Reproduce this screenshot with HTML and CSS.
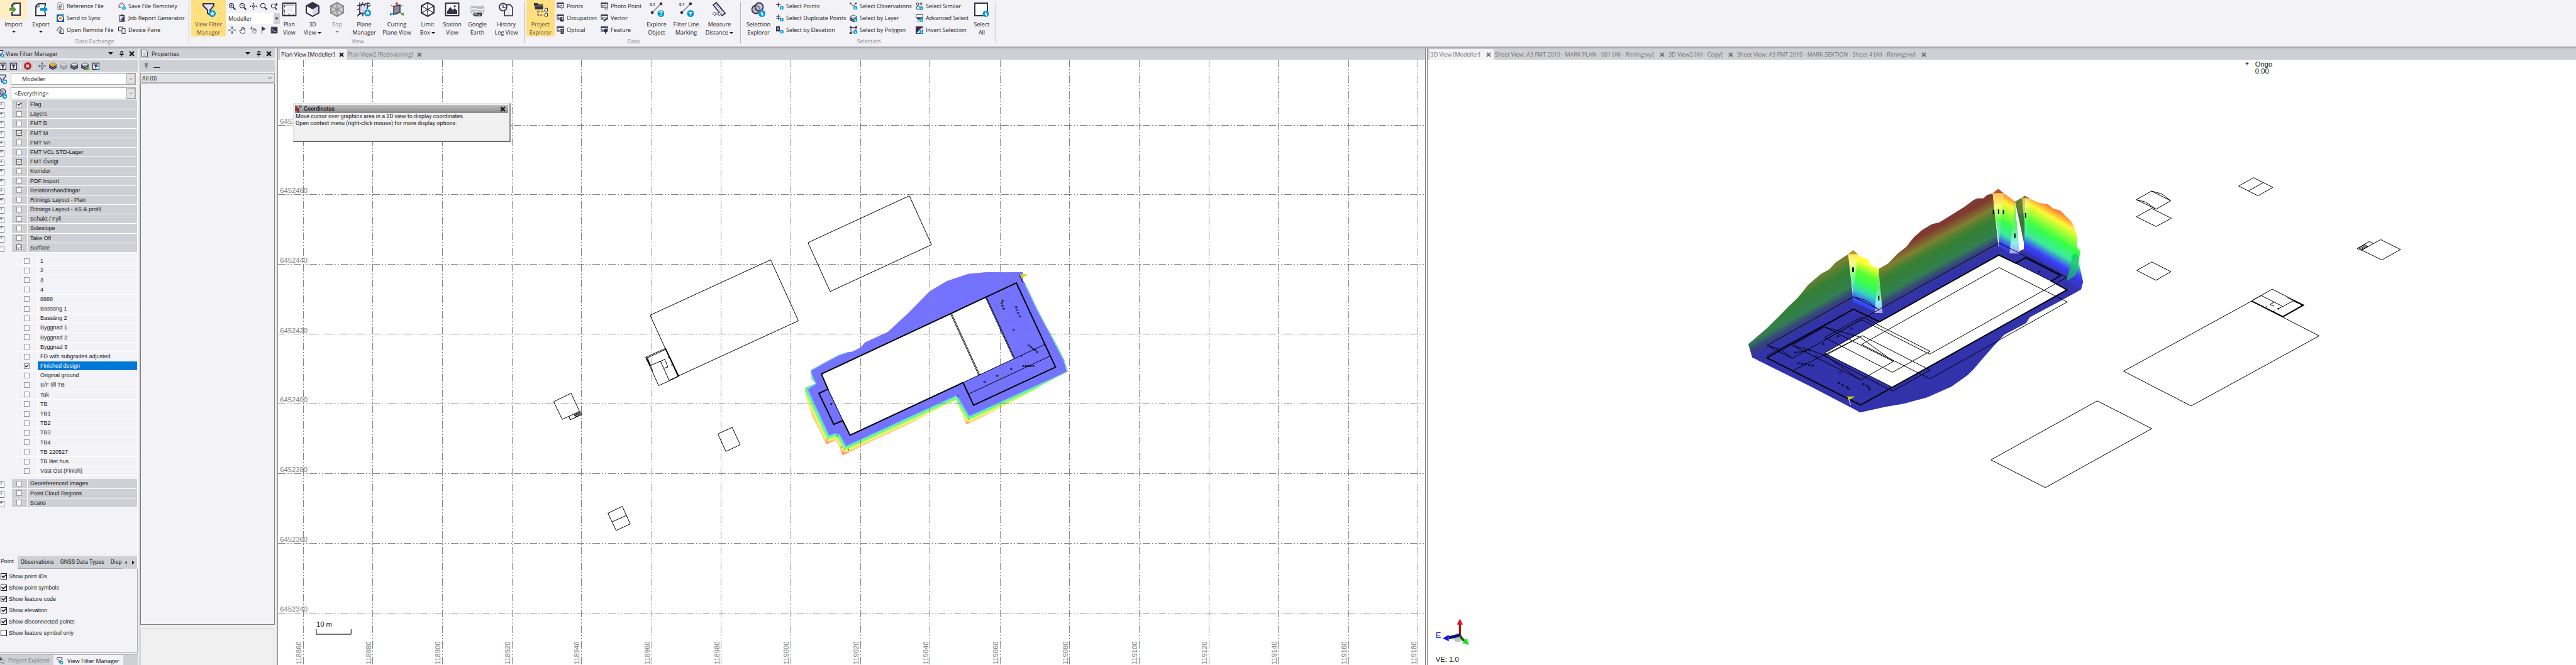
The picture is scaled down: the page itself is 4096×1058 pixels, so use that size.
FILE: index.html
```html
<!DOCTYPE html>
<html lang="en">
<head>
<meta charset="utf-8">
<title>Plan View [Modeller]</title>
<link rel="stylesheet" href="styles.css">
</head>
<body>
<svg class="defs" aria-hidden="true">
  <defs>
    <symbol id="star" viewBox="0 0 10 10"><circle cx="5" cy="5" r="5" fill="#009ad9"/><path d="M5 1.6l1 2.2 2.4.2-1.8 1.6.6 2.4L5 6.800l-2.200 1.200.6-2.400L1.600 4l2.400-.2z" fill="#fff"/></symbol>
    <symbol id="cur" viewBox="0 0 10 10"><circle cx="5" cy="5" r="5" fill="#009ad9"/><path d="M3.500 1.500v6l1.500-1.300 1 2.300 1-.5-1-2.100h1.700z" fill="#fff"/></symbol>
    <symbol id="import" viewBox="0 0 24 24"><path d="M9 9V5l3-3h10v19H9v-5" fill="#fff" stroke="#33304a" stroke-width="2"/><path d="M9 5h4V2" fill="none" stroke="#33304a"/><path d="M5 10h5V6l6 6-6 6v-4H5z" fill="#5a9a2c"/></symbol>
    <symbol id="export" viewBox="0 0 24 24"><path d="M19 7V3H8L4 7v15h15v-5" fill="#fff" stroke="#33304a" stroke-width="2"/><path d="M4 8h5V3" fill="none" stroke="#33304a"/><path d="M11 10h6V6l6 6-6 6v-4h-6z" fill="#009ad9"/></symbol>
    <symbol id="ref" viewBox="0 0 12 12"><path d="M2 .5h5.500L10.500 3v8.500H2z" fill="#fff" stroke="#777"/><rect x="5" y="2.500" width="3" height="4" rx="1.500" fill="none" stroke="#555"/><rect x="4" y="5.500" width="3" height="4" rx="1.500" fill="none" stroke="#555"/></symbol>
    <symbol id="sync" viewBox="0 0 12 12"><path d="M0 0h12v12H0z" fill="#155f9e"/><circle cx="6" cy="6" r="3.200" fill="none" stroke="#fff" stroke-width="2"/><circle cx="6" cy="6" r="2.400" fill="#f6a51c"/><path d="M9 1l3 0v5z" fill="#5fb8e8"/></symbol>
    <symbol id="remote" viewBox="0 0 12 12"><path d="M3 7.500C0 7.500 0 4 2.500 3.500 3 0 8 0 8.500 3.500" fill="#e4e3f5" stroke="#33304a"/><path d="M5.500 4h4l2 2v5.500h-6z" fill="#fff" stroke="#33304a"/><path d="M3 11l4-4M7 10V7H4" fill="none" stroke="#33304a"/></symbol>
    <symbol id="saverem" viewBox="0 0 12 12"><path d="M3 7.500C0 7.500 0 4 2.500 3.500 3 0 8 0 8.500 3.500c2 .5 2 2 1.500 3" fill="#e4e3f5" stroke="#33304a"/><path d="M2 9l2-2" stroke="#33304a"/><circle cx="9" cy="9" r="3" fill="#009ad9"/><path d="M7 8h4M7 10h4M9 6v6" stroke="#fff" stroke-width=".6"/></symbol>
    <symbol id="report" viewBox="0 0 12 12"><path d="M2 1.500h8v10H2z" fill="#e4e3f5" stroke="#33304a"/><path d="M4 0h4v2.500H4z" fill="#33304a"/><path d="M4.500 10V7M6.500 10V5M8.500 10V3.500" stroke="#33304a" stroke-width="1.500"/></symbol>
    <symbol id="device" viewBox="0 0 12 12"><path d="M.5 1h7v6h-7z" fill="#fff" stroke="#33304a"/><path d="M6 3.500h5v8H6z" fill="#fff" stroke="#33304a"/></symbol>
    <symbol id="funnel" viewBox="0 0 24 24"><path d="M3 3h17v3l-6 7v8l-4-3v-5L3 6z" fill="#e4e3f5" stroke="#33304a" stroke-width="2"/><use href="#star" x="12" y="13" width="11" height="11"/></symbol>
    <symbol id="mag" viewBox="0 0 12 12"><circle cx="5" cy="5" r="3.600" fill="#fff" stroke="#33304a" stroke-width="1.200"/><path d="M7.500 7.500l4 4" stroke="#33304a" stroke-width="2"/></symbol>
    <symbol id="magin" viewBox="0 0 12 12"><use href="#mag"/><path d="M3 5h4M5 3v4" stroke="#33304a"/></symbol>
    <symbol id="magout" viewBox="0 0 12 12"><use href="#mag"/><path d="M3 5h4" stroke="#33304a"/></symbol>
    <symbol id="ext" viewBox="0 0 12 12"><circle cx="6" cy="6" r="1.700" fill="#fff" stroke="#33304a"/><path d="M6 0l1.500 2h-3zM6 12l1.500-2h-3zM0 6l2-1.500v3zM12 6l-2-1.500v3z" fill="#33304a"/><path d="M2 6h2M8 6h2M6 2v2M6 8v2" stroke="#33304a" stroke-width=".6"/></symbol>
    <symbol id="magplus" viewBox="0 0 12 12"><use href="#mag" y="1" width="11" height="11"/><path d="M7 3h5M9.500 .5v5" stroke="#33304a"/></symbol>
    <symbol id="cross" viewBox="0 0 12 12"><path d="M6 0v4M6 8v4M0 6h4M8 6h4" stroke="#33304a" stroke-width="1.200"/><path d="M6 4.600l-1.500-2h3zM6 7.400l-1.500 2h3z" fill="#33304a"/></symbol>
    <symbol id="hand" viewBox="0 0 12 12"><path d="M3.500 11L1 7l1-1 1.500 1V2.500l1.500 0V1.500l1.500-.5 0 1h1.500v1h1.500v5L8.500 11z" fill="#fff" stroke="#33304a" stroke-width=".9"/><path d="M5 3v3M6.600 3v3M8.200 3v3" stroke="#33304a" stroke-width=".7"/></symbol>
    <symbol id="hand2" viewBox="0 0 12 12"><use href="#hand" x="3" y="2" width="9" height="10"/><path d="M3 0v6M0 3h6" stroke="#33304a" stroke-width=".8"/></symbol>
    <symbol id="flag" viewBox="0 0 12 12"><path d="M3.500 0v12" stroke="#33304a"/><path d="M4 .5L9.500 4 4 7z" fill="#33304a"/></symbol>
    <symbol id="term" viewBox="0 0 12 12"><path d="M1 1h10v10H1z" fill="#33304a" stroke="#77748a"/><path d="M3 3.500l2 2-2 2M5.500 8.500h3" fill="none" stroke="#fff" stroke-width=".9"/></symbol>
    <symbol id="plan" viewBox="0 0 24 24"><path d="M1.500 2h21v20h-21z" fill="#fff" stroke="#33304a" stroke-width="1.800"/><path d="M4.500 18V5h15" fill="none" stroke="#33304a" stroke-width="1.500" stroke-dasharray="1 1"/><path d="M4 19.500h16" stroke="#33304a" stroke-width="1.500" stroke-dasharray="1 1"/><path d="M9 8h8v8H9z" fill="#e4e3ee"/><path d="M15 10h-3v5h3" fill="none" stroke="#fff" stroke-width="1.500"/></symbol>
    <symbol id="cube" viewBox="0 0 24 24"><path d="M2 6.500L12 1l10 5.500v11L12 23 2 17.500z" fill="#fff" stroke="#33304a" stroke-width="2"/><path d="M2 6.500L12 1l10 5.500L12 12z" fill="#33304a"/><path d="M12 12v10l9-5V7z" fill="#d6d4ea"/></symbol>
    <symbol id="cubetop" viewBox="0 0 24 24"><path d="M2 6.500L12 1l10 5.500v11L12 23 2 17.500z" fill="#c9c9c9" stroke="#888" stroke-width="2"/><path d="M2 6.500L12 12l10-5.500M12 12v11M12 1v11L2 17.500M12 12l10 5.500" fill="none" stroke="#888" stroke-width="1.400"/></symbol>
    <symbol id="plane" viewBox="0 0 24 24"><path d="M6 7l11-3v12L6 19z" fill="#dddcea"/><path d="M1 6l20-4M1 12l4-1M2 20l16-4M5 1v20M10 1l-3 6M17 1v10M10 23v-6M14 2l-2 5M1 23l6-6M17 8l5-3" fill="none" stroke="#33304a" stroke-width="1.700"/><use href="#star" x="12" y="12" width="11" height="11"/></symbol>
    <symbol id="cut" viewBox="0 0 24 24"><path d="M12 4v16M3 5l8 6M21 5l-8 6M12 13l-8 7M12 13l8 6" stroke="#33304a"/><path d="M12 0l3 4H9z" fill="#e02020"/><path d="M1 22v-5l5 3z" fill="#009ad9"/><path d="M23 22v-5l-5 3z" fill="#5a9a2c"/><path d="M7 7l10-2v12L7 20z" fill="#8e8c99" stroke="#33304a" stroke-width="1.500"/></symbol>
    <symbol id="limit" viewBox="0 0 24 24"><path d="M2 6.500L12 1l10 5.500v11L12 23 2 17.500z" fill="#fff" stroke="#33304a" stroke-width="2"/><path d="M2 6.500L12 12l10-5.500M12 12v11M12 1v11L2 17.500M12 12l10 5.500" fill="none" stroke="#33304a" stroke-width="1.300"/></symbol>
    <symbol id="station" viewBox="0 0 24 24"><path d="M1.500 2h21v20h-21z" fill="#fff" stroke="#33304a" stroke-width="2"/><path d="M4 19v-4l5-7 4 5 3-3 4 4v5z" fill="#33304a"/><circle cx="16" cy="7" r="1.700" fill="#33304a"/></symbol>
    <symbol id="earth" viewBox="0 0 24 24"><circle cx="12" cy="12" r="11.500" fill="#b9bcc4"/><path d="M1 9c6-7 12 2 21-4-3-4-7-5-10-5S3 3 1 9z" fill="#f4f4f6"/><path d="M1 13c7-6 12 3 22-2M3 19c6-7 11 1 18-3" fill="none" stroke="#f2f2f5" stroke-width="2.500"/><path d="M6 17h13v6H6z" fill="#333"/><text x="12" y="22" text-anchor="middle" font-size="6" fill="#fff">Pro</text></symbol>
    <symbol id="history" viewBox="0 0 26 24"><path d="M10 4h10l4 5v14H10z" fill="#fff" stroke="#33304a" stroke-width="1.800"/><path d="M12 12h9M12 15h9M12 18h9M12 21h9" stroke="#bbb"/><circle cx="7.500" cy="8" r="6.500" fill="#eeeefa" stroke="#33304a" stroke-width="2"/><path d="M7.500 4v5h4" fill="none" stroke="#33304a" stroke-width="1.500"/></symbol>
    <symbol id="proj" viewBox="0 0 24 24"><path d="M1 2h6l1 2h7v2H1z" fill="#33304a"/><path d="M2 7h14l-1 5H3z" fill="#33304a"/><path d="M7 14v7h9M7 15h9" fill="none" stroke="#33304a" stroke-width="1.600" stroke-dasharray="1.500 1"/><path d="M18 12l2-2h2.500v5H18zM18 20l2-2h2.500v5H18z" fill="#fff" stroke="#33304a"/></symbol>
    <symbol id="table" viewBox="0 0 12 12"><path d="M1 1h10v7H1z" fill="#fff" stroke="#33304a"/><path d="M.5 0h11v2.500H.5z" fill="#33304a"/><path d="M2.500 4.500h2M6 4.500h2M2.500 6.500h2" stroke="#33304a"/></symbol>
    <symbol id="t1" viewBox="0 0 12 12"><use href="#table"/><path d="M8 5.500v5M6 8h4" stroke="#33304a"/><circle cx="8" cy="8" r="1" fill="#fff"/></symbol>
    <symbol id="t2" viewBox="0 0 12 12"><use href="#table"/><circle cx="8.500" cy="8" r="3.500" fill="#33304a"/><path d="M8.500 8V5.500A2.500 2.500 0 0 1 11 8z" fill="#fff"/></symbol>
    <symbol id="t3" viewBox="0 0 12 12"><use href="#table"/><rect x="6.500" y="4" width="5" height="8" rx="1" fill="#33304a"/><path d="M8 6h2M8 9h2" stroke="#fff"/></symbol>
    <symbol id="t4" viewBox="0 0 12 12"><use href="#table"/><circle cx="9" cy="9" r="2" fill="#fff" stroke="#33304a"/></symbol>
    <symbol id="t5" viewBox="0 0 12 12"><use href="#table"/><path d="M5 11l6-6" stroke="#33304a" stroke-width="2"/></symbol>
    <symbol id="t6" viewBox="0 0 12 12"><use href="#table"/><circle cx="8" cy="6.500" r="3" fill="#33304a"/><path d="M8 8v4" stroke="#33304a" stroke-width="1.500"/></symbol>
    <symbol id="line01" viewBox="0 0 24 24"><text x="1" y="6" font-size="6" font-weight="700" fill="#33304a">0.1</text><path d="M5 17L19 3" stroke="#777585" stroke-width="1.500"/><circle cx="5" cy="17" r="2.300" fill="#33304a"/><circle cx="19" cy="3" r="2.300" fill="#33304a"/></symbol>
    <symbol id="explore" viewBox="0 0 24 24"><use href="#line01"/><circle cx="19" cy="18.500" r="5.500" fill="#009ad9"/><path d="M17 17c0-3 4-3 4-.5 0 1.500-2 1.500-2 3M19 20.500v1.500" fill="none" stroke="#fff" stroke-width="1.400"/></symbol>
    <symbol id="filterline" viewBox="0 0 24 24"><use href="#line01"/><circle cx="19" cy="18.500" r="5.500" fill="#009ad9"/><path d="M16 16h6l-2 3v3l-2-1v-2z" fill="#fff"/></symbol>
    <symbol id="measure" viewBox="0 0 24 24"><path d="M2 5l5-4 14 17-5 4z" fill="#e4e3f5" stroke="#33304a" stroke-width="1.800"/><path d="M7 6l2-1.500M9.500 9l2-1.500M12 12l2-1.500M14.500 15l2-1.500" stroke="#33304a"/><path d="M1 19l4-3v2h6v-2l4 3-4 3v-2H5v2z" fill="#fff" stroke="#33304a" stroke-width=".8"/></symbol>
    <symbol id="selexp" viewBox="0 0 24 24"><circle cx="8" cy="12" r="6.500" fill="#a9a6bf" fill-opacity=".8" stroke="#33304a" stroke-width="1.800"/><circle cx="13" cy="8" r="6.500" fill="#a9a6bf" fill-opacity=".6" stroke="#33304a" stroke-width="1.800"/><use href="#cur" x="12" y="13" width="11" height="11"/></symbol>
    <symbol id="selpt" viewBox="0 0 12 12"><path d="M3.500 0v7M0 3.500h7" stroke="#33304a"/><circle cx="3.500" cy="3.500" r="1.200" fill="#33304a"/><use href="#cur" x="6" y="5.500" width="6" height="6"/></symbol>
    <symbol id="seldup" viewBox="0 0 12 12"><path d="M3.500 0v9M0 3h7M0 6h7" stroke="#33304a"/><use href="#cur" x="6" y="5.500" width="6" height="6"/></symbol>
    <symbol id="selel" viewBox="0 0 12 12"><path d="M0 0h6v8H0z" fill="#33304a"/><path d="M3 6V2M1.500 3.500L3 2l1.500 1.500" fill="none" stroke="#fff"/><use href="#cur" x="6" y="5.500" width="6" height="6"/></symbol>
    <symbol id="selobs" viewBox="0 0 12 12"><path d="M1 1l5 5 4-5" fill="none" stroke="#33304a"/><circle cx="1.200" cy="1.200" r="1.200" fill="#33304a"/><circle cx="10" cy="1.200" r="1.200" fill="#33304a"/><use href="#cur" x="6" y="5.500" width="6" height="6"/></symbol>
    <symbol id="layers" viewBox="0 0 12 12"><path d="M0 7l6 3 6-3v2l-6 3-6-3zM0 4.500l6 3 6-3V6.500l-6 3-6-3z" fill="#33304a"/><path d="M.5 3.500L6 .8l5.500 2.700L6 6.200z" fill="#e9e8f5" stroke="#33304a" stroke-width=".8"/></symbol>
    <symbol id="sellay" viewBox="0 0 12 12"><use href="#layers"/><use href="#cur" x="6" y="6" width="6" height="6"/></symbol>
    <symbol id="selpoly" viewBox="0 0 12 12"><path d="M2 1.500h8v9H2z" fill="#e4e3f5" stroke="#33304a"/><path d="M0 0h3v3H0zM9 0h3v3H9zM0 9h3v3H0z" fill="#33304a"/><use href="#cur" x="6" y="6" width="6" height="6"/></symbol>
    <symbol id="selsim" viewBox="0 0 12 12"><circle cx="3" cy="2.500" r="2" fill="none" stroke="#33304a"/><circle cx="8.500" cy="2" r="1.600" fill="none" stroke="#33304a"/><circle cx="4" cy="8.500" r="2.800" fill="none" stroke="#33304a"/><use href="#cur" x="6" y="6" width="6" height="6"/></symbol>
    <symbol id="seladv" viewBox="0 0 12 12"><path d="M.5 .5h11v4H.5z" fill="#fff" stroke="#33304a"/><path d="M2 6.500h9M2 8.500h6M2 10.500h6" stroke="#33304a"/><use href="#cur" x="6" y="6" width="6" height="6"/></symbol>
    <symbol id="selinv" viewBox="0 0 12 12"><path d="M.5 .5h11v11H.5z" fill="#fff" stroke="#33304a"/><path d="M0 12V0h12z" fill="#33304a"/><use href="#cur" x="6" y="6" width="6" height="6"/></symbol>
    <symbol id="selall" viewBox="0 0 24 24"><path d="M1 2h20v20H1z" fill="#fff" stroke="#33304a" stroke-width="2"/><use href="#cur" x="13" y="14" width="11" height="10"/></symbol>
    <symbol id="pin" viewBox="0 0 10 10"><path d="M3 1h4v5M3.500 1v5M1.500 6h7M5 6v4" fill="none" stroke="#000" stroke-width="1.200"/></symbol>
    <symbol id="x" viewBox="0 0 8 8"><path d="M1 1l6 6M7 1L1 7" stroke="currentColor" stroke-width="1.900"/></symbol>
    <symbol id="doc" viewBox="0 0 12 12"><path d="M1.500 .5h6l3 3v8h-9z" fill="#fff" stroke="#444"/><path d="M3 4h5M3 6h6M3 8h6M3 10h6" stroke="#777" stroke-width=".7"/></symbol>
    <symbol id="filt2" viewBox="0 0 12 12"><path d="M1.500 1.500h10v10h-10z" fill="#fff" stroke="#33304a" stroke-width="1.500"/><path d="M3 3.500h7L7.500 7v3.500l-2-1V7z" fill="#33304a"/></symbol>
    <symbol id="filt3" viewBox="0 0 12 12"><use href="#filt2"/><circle cx="9" cy="9" r="2.500" fill="#fff" stroke="#009ad9"/></symbol>
    <symbol id="stop" viewBox="0 0 12 12"><circle cx="6" cy="6" r="6" fill="#c8202c"/><path d="M4 4l4 4M8 4L4 8" stroke="#fff" stroke-width="1.800"/></symbol>
    <symbol id="layorange" viewBox="0 0 12 12"><use href="#layers"/><path d="M.5 3.500L6 .8l5.500 2.700L6 6.200z" fill="#ffb400"/></symbol>
    <symbol id="laygreen" viewBox="0 0 12 12"><use href="#layers"/><rect x="7" y="7" width="5" height="5" rx="1" fill="#4aa32c"/></symbol>
    <symbol id="chev" viewBox="0 0 8 8"><path d="M1 2.500l3 3 3-3" fill="none" stroke="#444"/></symbol>
  </defs>
</svg>

<header class="ribbon">
  <section class="group exchange">
    <div class="tools">
      <button class="big w43 warm"><svg><use href="#import"/></svg>Import<i></i></button>
      <button class="big w44"><svg><use href="#export"/></svg>Export<i></i></button>
      <div class="col w98"><button><svg><use href="#ref"/></svg>Reference File</button><button><svg><use href="#sync"/></svg>Send to Sync</button><button><svg><use href="#remote"/></svg>Open Remote File</button></div>
      <div class="col"><button><svg><use href="#saverem"/></svg>Save File Remotely</button><button><svg><use href="#report"/></svg>Job Report Generator</button><button><svg><use href="#device"/></svg>Device Pane</button></div>
    </div>
    <h2>Data Exchange</h2>
  </section>
  <section class="group viewing">
    <div class="tools">
      <button class="big w55 on"><svg><use href="#funnel"/></svg>View Filter<br>Manager</button>
      <div class="nav">
        <div><button aria-label="Zoom in"><svg><use href="#magin"/></svg></button><button aria-label="Zoom out"><svg><use href="#magout"/></svg></button><button aria-label="Zoom extents"><svg><use href="#ext"/></svg></button><button aria-label="Zoom window"><svg><use href="#mag"/></svg></button><button aria-label="Zoom selected"><svg><use href="#magplus"/></svg></button></div>
        <div class="pick"><select aria-label="View filter"><option>Modeller</option></select><i></i></div>
        <div><button aria-label="Center"><svg><use href="#cross"/></svg></button><button aria-label="Pan"><svg><use href="#hand"/></svg></button><button aria-label="Pan to point"><svg><use href="#hand2"/></svg></button><button aria-label="Flag"><svg><use href="#flag"/></svg></button><button aria-label="Command pane"><svg><use href="#term"/></svg></button></div>
      </div>
      <button class="big w28"><svg><use href="#plan"/></svg>Plan<br>View</button>
      <button class="big w46"><svg><use href="#cube"/></svg>3D<span>View <i></i></span></button>
      <button class="big w32 dim"><svg><use href="#cubetop"/></svg>Top<i></i></button>
      <button class="big w54"><svg><use href="#plane"/></svg>Plane<br>Manager</button>
      <button class="big w50"><svg><use href="#cut"/></svg>Cutting<br>Plane View</button>
      <button class="big w48"><svg><use href="#limit"/></svg>Limit<span>Box <i></i></span></button>
      <button class="big w30"><svg><use href="#station"/></svg>Station<br>View</button>
      <button class="big w50"><svg><use href="#earth"/></svg>Google<br>Earth</button>
      <button class="big w42"><svg><use href="#history"/></svg>History<br>Log View</button>
    </div>
    <h2>View</h2>
  </section>
  <section class="group data">
    <div class="tools">
      <button class="big w45 on"><svg><use href="#proj"/></svg>Project<br>Explorer</button>
      <div class="col w70"><button><svg><use href="#t1"/></svg>Points</button><button><svg><use href="#t2"/></svg>Occupation</button><button><svg><use href="#t3"/></svg>Optical</button></div>
      <div class="col w70"><button><svg><use href="#t4"/></svg>Photo Point</button><button><svg><use href="#t5"/></svg>Vector</button><button><svg><use href="#t6"/></svg>Feature</button></div>
      <button class="big w44"><svg><use href="#explore"/></svg>Explore<br>Object</button>
      <button class="big w50"><svg><use href="#filterline"/></svg>Filter Line<br>Marking</button>
      <button class="big w56"><svg><use href="#measure"/></svg>Measure<span>Distance <i></i></span></button>
    </div>
    <h2>Data</h2>
  </section>
  <section class="group selection">
    <div class="tools">
      <button class="big w54"><svg><use href="#selexp"/></svg>Selection<br>Explorer</button>
      <div class="col w116"><button><svg><use href="#selpt"/></svg>Select Points</button><button><svg><use href="#seldup"/></svg>Select Duplicate Points</button><button><svg><use href="#selel"/></svg>Select by Elevation</button></div>
      <div class="col w105"><button><svg><use href="#selobs"/></svg>Select Observations</button><button><svg><use href="#sellay"/></svg>Select by Layer</button><button><svg><use href="#selpoly"/></svg>Select by Polygon</button></div>
      <div class="col w89"><button><svg><use href="#selsim"/></svg>Select Similar</button><button><svg><use href="#seladv"/></svg>Advanced Select</button><button><svg><use href="#selinv"/></svg>Invert Selection</button></div>
      <button class="big w32"><svg><use href="#selall"/></svg>Select<br>All</button>
    </div>
    <h2>Selection</h2>
  </section>
</header>

<main class="dock">
  <aside class="panel filter">
    <div class="title"><svg class="ic cutoff"><use href="#funnel"/></svg><h3>View Filter Manager</h3><i></i><button aria-label="Pin"><svg><use href="#pin"/></svg></button><button aria-label="Close"><svg><use href="#x"/></svg></button></div>
    <div class="bar">
      <button aria-label="Copy filter" class="first"><svg><use href="#filt2"/></svg></button><button aria-label="Edit filter"><svg><use href="#filt2"/></svg></button><s></s><button aria-label="Delete"><svg><use href="#stop"/></svg></button><s></s><button aria-label="Extents"><svg><use href="#ext"/></svg></button><button aria-label="All layers"><svg><use href="#layorange"/></svg></button><button aria-label="Layer manager" class="faded"><svg><use href="#layers"/></svg></button><button aria-label="Find layer"><svg><use href="#layers"/></svg></button><button aria-label="New layer"><svg><use href="#laygreen"/></svg></button><button aria-label="Filter settings"><svg><use href="#filt3"/></svg></button>
    </div>
    <div class="combos">
      <div class="combo indent"><svg class="ic cutoff"><use href="#funnel"/></svg><select aria-label="Filter"><option>Modeller</option></select><svg class="drop"><use href="#chev"/></svg></div>
      <div class="combo"><svg class="ic cutoff"><use href="#selexp"/></svg><select aria-label="Selection set"><option>&lt;Everything&gt;</option></select><svg class="drop"><use href="#chev"/></svg></div>
    </div>
    <div class="tree">
      <ul class="top n16">
        <li><button class="tog" aria-label="Expand"></button><label><input type="checkbox" checked><span>Flag</span></label></li>
        <li><button class="tog" aria-label="Expand"></button><label><input type="checkbox"><span>Layers</span></label></li>
        <li><button class="tog" aria-label="Expand"></button><label><input type="checkbox"><span>FMT B</span></label></li>
        <li><button class="tog" aria-label="Expand"></button><label><input type="checkbox" class="part" checked><span>FMT M</span></label></li>
        <li><button class="tog" aria-label="Expand"></button><label><input type="checkbox"><span>FMT VA</span></label></li>
        <li><button class="tog" aria-label="Expand"></button><label><input type="checkbox"><span>FMT VCL STD-Lager</span></label></li>
        <li><button class="tog" aria-label="Expand"></button><label><input type="checkbox" class="part" checked><span>FMT Övrigt</span></label></li>
        <li><button class="tog" aria-label="Expand"></button><label><input type="checkbox"><span>Korridor</span></label></li>
        <li><button class="tog" aria-label="Expand"></button><label><input type="checkbox"><span>PDF Import</span></label></li>
        <li><button class="tog" aria-label="Expand"></button><label><input type="checkbox"><span>Relationshandlingar</span></label></li>
        <li><button class="tog" aria-label="Expand"></button><label><input type="checkbox"><span>Ritnings Layout - Plan</span></label></li>
        <li><button class="tog" aria-label="Expand"></button><label><input type="checkbox"><span>Ritnings Layout - XS &amp; profil</span></label></li>
        <li><button class="tog" aria-label="Expand"></button><label><input type="checkbox"><span>Schakt / Fyll</span></label></li>
        <li><button class="tog" aria-label="Expand"></button><label><input type="checkbox"><span>Sideslope</span></label></li>
        <li><button class="tog" aria-label="Expand"></button><label><input type="checkbox"><span>Take Off</span></label></li>
        <li><button class="tog open" aria-label="Collapse"></button><label><input type="checkbox" class="part" checked><span>Surface</span></label></li>
      </ul>
      <ul class="sub n23">
        <li><label><input type="checkbox"><span>1</span></label></li>
        <li><label><input type="checkbox"><span>2</span></label></li>
        <li><label><input type="checkbox"><span>3</span></label></li>
        <li><label><input type="checkbox"><span>4</span></label></li>
        <li><label><input type="checkbox"><span>8888</span></label></li>
        <li><label><input type="checkbox"><span>Bassäng 1</span></label></li>
        <li><label><input type="checkbox"><span>Bassäng 2</span></label></li>
        <li><label><input type="checkbox"><span>Byggnad 1</span></label></li>
        <li><label><input type="checkbox"><span>Byggnad 2</span></label></li>
        <li><label><input type="checkbox"><span>Byggnad 3</span></label></li>
        <li><label><input type="checkbox"><span>FD with subgrades adjusted</span></label></li>
        <li class="sel"><label><input type="checkbox" checked><span>Finished design</span></label></li>
        <li><label><input type="checkbox"><span>Original ground</span></label></li>
        <li><label><input type="checkbox"><span>S/F till TB</span></label></li>
        <li><label><input type="checkbox"><span>Tak</span></label></li>
        <li><label><input type="checkbox"><span>TB</span></label></li>
        <li><label><input type="checkbox"><span>TB1</span></label></li>
        <li><label><input type="checkbox"><span>TB2</span></label></li>
        <li><label><input type="checkbox"><span>TB3</span></label></li>
        <li><label><input type="checkbox"><span>TB4</span></label></li>
        <li><label><input type="checkbox"><span>TB 220527</span></label></li>
        <li><label><input type="checkbox"><span>TB litet hus</span></label></li>
        <li><label><input type="checkbox"><span>Väst Öst (Finish)</span></label></li>
      </ul>
      <ul class="top n3">
        <li><button class="tog" aria-label="Expand"></button><label><input type="checkbox"><span>Georeferenced Images</span></label></li>
        <li><button class="tog" aria-label="Expand"></button><label><input type="checkbox"><span>Point Cloud Regions</span></label></li>
        <li><button class="tog" aria-label="Expand"></button><label><input type="checkbox"><span>Scans</span></label></li>
      </ul>
    </div>
    <div class="opttabs"><button class="cur">Point</button><button>Observations</button><button>GNSS Data Types</button><button class="clip">Disp</button><b class="l"></b><b class="r"></b></div>
    <div class="opts">
      <label><input type="checkbox" checked>Show point IDs</label>
      <label><input type="checkbox" checked>Show point symbols</label>
      <label><input type="checkbox" checked>Show feature code</label>
      <label><input type="checkbox" checked>Show elevation</label>
      <label><input type="checkbox" checked>Show disconnected points</label>
      <label><input type="checkbox">Show feature symbol only</label>
    </div>
    <div class="foot"><button><svg class="ic cutoff"><use href="#proj"/></svg>Project Explorer</button><button class="cur"><svg class="ic"><use href="#funnel"/></svg>View Filter Manager</button></div>
  </aside>

  <aside class="panel props">
    <div class="title"><svg class="ic"><use href="#doc"/></svg><h3>Properties</h3><i></i><button aria-label="Pin"><svg><use href="#pin"/></svg></button><button aria-label="Close"><svg><use href="#x"/></svg></button></div>
    <div class="bar"><em></em><hr></div>
    <div class="combo flat"><select aria-label="Object"><option>All (0)</option></select><svg class="drop"><use href="#chev"/></svg></div>
    <div class="sheet"></div>
    <div class="help"></div>
  </aside>

  <section class="view planview">
    <nav class="tabs"><div class="cur"><a href="#plan1">Plan View [Modeller]</a><button aria-label="Close"><svg><use href="#x"/></svg></button></div><div><a href="#plan2">Plan View2 [Redovisning]</a><button aria-label="Close"><svg><use href="#x"/></svg></button></div></nav>
    <div class="stage">
      <svg class="draw" viewBox="551 119 2276 1201" preserveAspectRatio="xMinYMin slice">
        <defs>
          <clipPath id="surf"><path d="M285 765L350 718 410 675 445 660 470 655 508 630 527 600 628 538 715 430 815 295 890 235 985 192 1075 181 1150 183 1227 181 1230 235 1240 255 1290 395 1330 500 1350 545 1390 645 1412 705 1427 773 1330 840 1240 910 1160 965 1060 1035 978 1088 955 1015 932 943 870 980 715 1090 560 1185 427 1273 412 1215 398 1182 355 1207 330 1135 295 1045 270 950 259 870 310 845 290 820z"/></clipPath>
          <path id="toe" d="M285 765L312 848 274 880 368 1150 395 1138 415 1145 443 1213 935 910 990 1035 1427 765"/>
        </defs>
        <g transform="translate(1480 480) scale(.4464 .3333)">
          <g clip-path="url(#surf)" fill="none" stroke-linejoin="round">
            <path d="M200 100H1500V1300H200z" fill="#ffa06e"/>
            <use href="#toe" class="s22" stroke="#ffd070"/><use href="#toe" class="s20" stroke="#fff570"/><use href="#toe" class="s16" stroke="#d8fa6c"/><use href="#toe" class="s13" stroke="#8cff6c"/><use href="#toe" class="s10" stroke="#6cf98a"/><use href="#toe" class="s7" stroke="#6ee6c8"/><use href="#toe" class="s4" stroke="#70b8f4"/>
            <path d="M285 765L240 500 1000 100 1300 150 1427 771 990 1037 935 912 443 1215 415 1147 395 1140 368 1152 275 880 312 848z" fill="#7373ff"/>
            <path class="s4" stroke="#70d8dc" d="M285 765L350 716 410 673 445 658M1240 255L1290 395"/>
            <path class="s4" stroke="#6cf0b4" d="M1290 395L1350 545 1412 705 1427 773"/>
          </g>
          <path fill="#fff" d="M333 788L1063 332 1189 695 962 839 460 1152z"/>
        </g>
        <g class="grid">
          <path d="M601 119V1320M739 119V1320M877 119V1320M1015 119V1320M1153 119V1320M1292 119V1320M1430 119V1320M1568 119V1320M1706 119V1320M1844 119V1320M1983 119V1320M2121 119V1320M2259 119V1320M2397 119V1320M2535 119V1320M2674 119V1320M2812 119V1320"/>
          <path d="M551 249H2827M551 387H2827M551 525H2827M551 664H2827M551 802H2827M551 940H2827M551 1079H2827M551 1217H2827"/>
        </g>
        <g class="num">
          <text x="555" y="246">6452480</text><text x="555" y="384">6452460</text><text x="555" y="522">6452440</text><text x="555" y="661">6452420</text><text x="555" y="799">6452400</text><text x="555" y="937">6452380</text><text x="555" y="1076">6452360</text><text x="555" y="1214">6452340</text>
          <g transform="rotate(-90)"><text x="-1319" y="597">118860</text><text x="-1319" y="735">118880</text><text x="-1319" y="873">118900</text><text x="-1319" y="1011">118920</text><text x="-1319" y="1149">118940</text><text x="-1319" y="1288">118960</text><text x="-1319" y="1426">118980</text><text x="-1319" y="1564">119000</text><text x="-1319" y="1702">119020</text><text x="-1319" y="1840">119040</text><text x="-1319" y="1979">119060</text><text x="-1319" y="2117">119080</text><text x="-1319" y="2255">119100</text><text x="-1319" y="2393">119120</text><text x="-1319" y="2531">119140</text><text x="-1319" y="2670">119160</text><text x="-1319" y="2808">119180</text></g>
        </g>
        <g class="ln">
          <path d="M1289 626L1528 516 1583 637 1344 747zM1602 482L1803 389 1847 486 1646 579z"/>
          <g transform="translate(1480 480) scale(.4464 .3333)">
            <path class="bold" d="M362 878L333 788 1199 246 1373 747 1009 974 962 839 460 1152 428 1065 388 1088 322 903z"/>
            <path d="M428 1065L362 878M962 839L1325 612M987 907L1350 680M907 430L1032 795M911 427L1036 792M1062 332L1187 696M1066 330L1191 694M1212 198L1228 244"/>
            <g fill="none"><circle cx="1138" cy="351" r="4"/><circle cx="1134" cy="365" r="4"/><circle cx="1137" cy="381" r="4"/><circle cx="1143" cy="399" r="4"/><circle cx="1198" cy="389" r="4"/><circle cx="1201" cy="405" r="4"/><circle cx="1207" cy="426" r="4"/><circle cx="1214" cy="445" r="4"/><circle cx="1187" cy="524" r="4"/><circle cx="1254" cy="618" r="4"/><circle cx="1264" cy="628" r="4"/><circle cx="1273" cy="637" r="4"/><circle cx="1282" cy="645" r="4"/><circle cx="1291" cy="657" r="4"/><circle cx="1222" cy="681" r="3"/><circle cx="1230" cy="741" r="4"/><circle cx="1241" cy="741" r="4"/><circle cx="1252" cy="741" r="4"/><circle cx="1263" cy="741" r="4"/><circle cx="1275" cy="741" r="4"/><circle cx="1176" cy="759" r="4"/><circle cx="1114" cy="798" r="4"/><circle cx="1058" cy="834" r="4"/><circle cx="377" cy="966" r="4"/></g>
            <path d="M935 918h6v5M984 1053l4 6M357 1173l5 4M402 1151l5 6M419 1221l6 3M433 1234l5 4M450 1237h4v5"/>
            <path d="M1215 195H1252L1222 217z" fill="#d6d600" stroke="none"/>
          </g>
          <g transform="translate(1080 680) scale(.3333 .4082)">
            <path d="M53 288L157 247 207 335 104 374zM145 359l6 17 70-26-10-16M1030 445l85-32 48 84-85 33zM376 830l85-33 48 85-84 32zM401 872l85-31M601 72L718 29 797 165 678 210zM605 77L716 35M610 72L642 138M628 112L716 82M688 90L740 184M708 126l24-6-14-32M711 86l6-6M733 74l10-4M751 111l14-4M740 184L797 163"/>
            <path class="bold" d="M718 29L797 165M603 74L628 112"/>
            <path d="M174 347l10 18M180 345l10 18M186 343l10 17M192 341l10 16M198 339l10 16M204 337l10 16M178 356l36-13"/>
          </g>
          <path d="M627 1249V1259H696V1249"/>
        </g>
        <text class="lbl" x="627" y="1244">10 m</text>
      </svg>
      <div class="coords" role="dialog" aria-label="Coordinates">
        <div class="head"><svg class="ic" viewBox="0 0 12 12"><path d="M1 0v9l2-2 2 4 1.500-1-2-3.500H7z" fill="#f01818" stroke="#000" stroke-width=".6"/><path d="M6 0l2 3M8 0L6 3M9 0l1 2M11 0l-2 4" stroke="#000" stroke-width=".7"/></svg><h3>Coordinates</h3><button aria-label="Close"><svg><use href="#x"/></svg></button></div>
        <p>Move cursor over graphics area in a 2D view to display coordinates.<br>Open context menu (right-click mouse) for more display options.</p>
      </div>
    </div>
  </section>

  <section class="view threeview">
    <nav class="tabs"><div class="cur"><a href="#v1">3D View [Modeller]</a><button aria-label="Close"><svg><use href="#x"/></svg></button></div><div><a href="#v2">Sheet View: A3 FMT 2019 - MARK PLAN - 001 [All - Ritningsvy]</a><button aria-label="Close"><svg><use href="#x"/></svg></button></div><div><a href="#v3">3D View2 [All - Copy]</a><button aria-label="Close"><svg><use href="#x"/></svg></button></div><div><a href="#v4">Sheet View: A3 FMT 2019 - MARK-SEKTION - Sheet 4 [All - Ritningsvy]</a><button aria-label="Close"><svg><use href="#x"/></svg></button></div></nav>
    <div class="stage">
      <svg class="draw" viewBox="2832 119 2280 1201" preserveAspectRatio="xMinYMin slice">
        <defs>
          <linearGradient id="ga" gradientUnits="userSpaceOnUse" x1="505" y1="780" x2="350" y2="590"><stop offset="0" stop-color="#3333a5"/><stop offset=".16" stop-color="#36427e"/><stop offset=".32" stop-color="#327f50"/><stop offset=".65" stop-color="#358033"/><stop offset=".85" stop-color="#6b8031"/><stop offset="1" stop-color="#8a7c30"/></linearGradient>
          <linearGradient id="gb" gradientUnits="userSpaceOnUse" x1="1100" y1="460" x2="935" y2="250"><stop offset="0" stop-color="#3333a5"/><stop offset=".12" stop-color="#36427e"/><stop offset=".26" stop-color="#327f50"/><stop offset=".52" stop-color="#358033"/><stop offset=".62" stop-color="#4a8031"/><stop offset=".74" stop-color="#7f7f31"/><stop offset=".85" stop-color="#805a30"/><stop offset=".94" stop-color="#803a30"/></linearGradient>
          <linearGradient id="gc" gradientUnits="userSpaceOnUse" x1="505" y1="780" x2="632" y2="585"><stop offset="0" stop-color="#3838f0"/><stop offset=".12" stop-color="#3a62ff"/><stop offset=".3" stop-color="#38d8b8"/><stop offset=".5" stop-color="#34ff50"/><stop offset=".72" stop-color="#60ff30"/><stop offset=".95" stop-color="#ffff34"/></linearGradient>
          <linearGradient id="gd" gradientUnits="userSpaceOnUse" x1="1210" y1="470" x2="1380" y2="270"><stop offset="0" stop-color="#3636d0"/><stop offset=".1" stop-color="#3a42ff"/><stop offset=".28" stop-color="#3ce8a0"/><stop offset=".5" stop-color="#36ff48"/><stop offset=".7" stop-color="#a8ff34"/><stop offset=".84" stop-color="#fff636"/><stop offset="1" stop-color="#ff8438"/></linearGradient>
          <linearGradient id="ge" gradientUnits="userSpaceOnUse" x1="0" y1="130" x2="0" y2="460"><stop offset="0" stop-color="#ffc050"/><stop offset=".25" stop-color="#f4ff70"/><stop offset=".5" stop-color="#60ff58"/><stop offset=".75" stop-color="#58e8c8"/><stop offset="1" stop-color="#4a58ff"/></linearGradient>
          <linearGradient id="gh" gradientUnits="userSpaceOnUse" x1="0" y1="494" x2="0" y2="740"><stop offset="0" stop-color="#ffe850"/><stop offset=".25" stop-color="#f4ff90"/><stop offset=".5" stop-color="#80ff78"/><stop offset=".75" stop-color="#58e8c8"/><stop offset="1" stop-color="#4a78ff"/></linearGradient>
          <linearGradient id="gf" gradientUnits="userSpaceOnUse" x1="0" y1="180" x2="0" y2="490"><stop offset="0" stop-color="#b8e83c"/><stop offset=".5" stop-color="#58f070"/><stop offset=".8" stop-color="#8ff0f0"/><stop offset="1" stop-color="#a8a0ff"/></linearGradient>
        </defs>
        <g transform="translate(3430 340) scale(.4847 .3333)">
          <path fill="#3232aa" d="M95 1110L505 770 605 840 1100 450 1165 490 1205 465 1385 630 1440 705 1365 765 1230 870 1215 905 1125 975 1080 1045 1035 1120 1000 1180 975 1215 910 1283 810 1347 715 1385 640 1403 535 1437 515 1420 330 1280z"/>
          <path fill="url(#ga)" d="M95 1112L78 1030 155 935 200 870 240 810 280 755 325 675 375 612 410 585 435 545 470 510 487 495 508 775z"/>
          <path fill="url(#gb)" d="M608 842L612 582 650 550 690 490 725 450 755 395 790 350 830 315 860 305 905 265 935 238 960 215 1000 172 1015 162 1040 162 1055 142 1078 133 1102 455z"/>
          <path fill="url(#gc)" d="M505 780V490L525 494 545 516 565 522 580 560 612 582 610 845z"/>
          <path fill="url(#gh)" d="M487 494H527L508 740z"/><path fill="#be962f" d="M487 495L507 470 526 494z"/>
          <path fill="url(#gf)" transform="translate(-555 355)" d="M1166 227L1150 490H1183z"/>
          <path fill="url(#gd)" transform="translate(-110 -15)" d="M1212 470L1220 147 1233 147 1280 196 1295 505 1275 505z"/>
          <path fill="#357a40" d="M1170 182L1190 165 1210 155 1212 470z"/>
          <path fill="#7a7f30" d="M1170 182L1205 158 1212 240 1188 260z" opacity=".7"/>
          <path fill="url(#gd)" d="M1205 470L1215 165 1230 165 1270 190 1303 197 1325 222 1355 235 1378 270 1400 300 1415 350 1422 380 1424 455 1437 475 1430 540 1448 660 1440 705 1385 655 1385 630z"/>
          <path fill="#18c860" d="M1405 500L1420 488 1432 520 1418 620 1380 655z" opacity=".7"/>
          <path fill="url(#ge)" d="M1078 132H1123L1104 430z"/><path fill="#b85a30" d="M1078 132L1101 105 1123 132z"/>
          <path fill="url(#ge)" d="M1198 160L1231 165 1214 420z" opacity=".75"/><path fill="#a8682e" d="M1197 158L1210 146 1231 165z"/>
          <path fill="url(#gf)" d="M1169 182L1147 490H1188z"/>
          <path fill="#fff" d="M390 1083L615 897 1103 500 1172 550 1318 655 1382 707 668 1287z"/>
        </g>
        <g class="ln">
          <g transform="translate(3430 340) scale(.4847 .3333)">
            <path class="bold" d="M508 822L155 1112 538 1393 668 1287 1382 707 1318 655 1356 622 1213 515 1172 548 1103 500 615 897z"/>
            <path d="M668 1287L390 1083 615 897M1172 548L1318 655"/>
            <path d="M612 825L508 748 155 1038 258 1115 612 825 560 770 508 748M155 1038L210 1062 258 1115M612 825L1104 427 1383 632 820 1090 542 885 390 1005M1104 574L1383 779 822 1237 542 1032zM390 990L545 868 822 1073 668 1198zM545 980L822 1185 668 1310 390 1100zM258 1038L390 928 672 1133 538 1243zM390 928L535 988 672 1133M258 1038L330 1065 395 1100 538 1243M535 988L258 1190M155 1100L508 822"/>
            <path d="M506 573v28M508 575v25M612 742v28M1081 230v26M1102 228v26M1122 232v24M1213 250v28M1169 372v26" class="bold"/>
            <g fill="none"><circle cx="272" cy="1080" r="4"/><circle cx="288" cy="1076" r="4"/><circle cx="301" cy="1072" r="4"/><circle cx="314" cy="1070" r="4"/><circle cx="329" cy="1066" r="4"/><circle cx="283" cy="1144" r="4"/><circle cx="298" cy="1149" r="4"/><circle cx="312" cy="1150" r="4"/><circle cx="327" cy="1154" r="4"/><circle cx="341" cy="1158" r="4"/><circle cx="385" cy="1030" r="4"/><circle cx="445" cy="983" r="4"/><circle cx="501" cy="937" r="4"/><circle cx="357" cy="1104" r="4"/><circle cx="455" cy="1198" r="4"/><circle cx="450" cy="1262" r="4"/><circle cx="464" cy="1274" r="4"/><circle cx="481" cy="1286" r="4"/><circle cx="488" cy="1295" r="4"/><circle cx="549" cy="1268" r="4"/><circle cx="564" cy="1279" r="4"/><circle cx="573" cy="1289" r="4"/><circle cx="573" cy="1300" r="4"/><circle cx="1268" cy="599" r="4"/></g>
            <path stroke="#fff" d="M486 1346L497 1390"/><path d="M482 1342H516L490 1362z" fill="#d6d600" stroke="none"/>
          </g>
          <path d="M4466 598L4212 737 4346 806 4600 667 4466 598M4160 796L4268 851 4057 968 3949 913z"/>
          <g transform="translate(4200 340) scale(.3827 .3333)">
            <path d="M628 89L705 39 805 97 728 147zM679 118L756 68M98 170L177 119 276 177 200 227zM98 170L145 184 200 227M177 119L230 136 276 177M98 272L177 222 279 281 200 330zM100 591L178 541 277 599 199 650zM1364 408L1467 467 1370 529 1265 470zM1242 461L1305 419 1328 432M1242 461L1265 472M695 773L802 703 965 798 857 867M745 741L857 806 912 771M880 753L960 800M832 820L857 806M812 780L790 794 812 804M768 810l8-6M808 838l8-7M700 768L745 741"/>
            <path class="bold" d="M695 773L857 867 963 798 912 771M829 818l8 4"/>
            <path d="M1248 457l24 13M1254 453l24 13M1260 449l24 13M1266 445l24 13M1272 441l24 12M1278 437l22 12"/>
          </g>
          <path d="M4457 124v6M4454 127h6"/>
        </g>
        <g class="lbl"><text x="4473" y="133">Origo</text><text x="4473" y="147">0.00</text><text x="2848" y="1314">VE: 1.0</text></g>
        <circle cx="2892" cy="1266" r="9" fill="#c4c4c4"/>
        <path d="M2896 1234V1264" stroke="#a01010" stroke-width="4"/><path d="M2890 1240L2896 1228 2902 1240z" fill="#e01818"/>
        <path d="M2896 1261L2874 1266" stroke="#101070" stroke-width="6"/><path d="M2862 1267L2874 1260V1273z" fill="#1414ee"/>
        <path d="M2896 1262L2904 1272" stroke="#0c6a0c" stroke-width="5"/><path d="M2914 1280L2901 1276 2909 1267z" fill="#14e014"/>
        <text x="2848" y="1267" class="east">E</text>
      </svg>
    </div>
  </section>
</main>
</body>
</html>
```

FILE: styles.css
```css
* { box-sizing: border-box; }
html, body { height: 100%; margin: 0; }
body {
  display: flex; flex-direction: column; overflow: hidden;
  background: #f0f0f0; color: #1a1a1a;
  font: 9px/13px "Open Sans", "Noto Sans", sans-serif;
}
button, select, input { font: inherit; color: inherit; margin: 0; }
button { border: 0; padding: 0; background: none; }
h2, h3, p, ul { margin: 0; padding: 0; font: inherit; list-style: none; }
a { color: inherit; text-decoration: none; }
svg { flex: none; }
.defs { position: absolute; width: 0; height: 0; }

/* small black triangle used by menus */
i { display: inline-block; width: 0; height: 0; border: 3px solid transparent; border-top-color: #111; border-bottom: 0; vertical-align: middle; }

/* ribbon */
.ribbon { display: flex; height: 77px; background: #f3f2f7; border-bottom: 3px solid #a9aab0; }
.group { display: flex; flex-direction: column; flex: none; position: relative; }
.exchange { width: 301px; } .viewing { width: 533px; } .data { width: 344px; } .selection { width: 406px; }
.group::after { content: ""; position: absolute; right: 0; top: 3px; height: 66px; border-right: 1px solid #b4b4b8; }
.group + .group { padding-left: 3px; }
.group.selection { padding-left: 1px; }
.tools { display: flex; height: 58px; }
.group h2 { text-align: center; color: #8b8b93; line-height: 15px; }
.big { display: flex; flex-direction: column; align-items: center; padding-top: 3px; line-height: 13px; text-align: center; white-space: nowrap; }
.big svg { width: 24px; height: 24px; margin-bottom: 5px; }
.big > i { margin-top: 4px; }
.big.on { background: #ffdf80; color: #5a5340; }
.big.warm { background: linear-gradient(#feeec2 31px, transparent 31px); }
.dim { color: #8b8b93; }
.dim i { border-top-color: #777; }
.w28 { width: 28px; } .w30 { width: 30px; } .w32 { width: 32px; } .w42 { width: 42px; } .w43 { width: 43px; }
.w44 { width: 44px; } .w45 { width: 45px; } .w46 { width: 46px; } .w48 { width: 48px; } .w50 { width: 50px; }
.w54 { width: 54px; } .w55 { width: 55px; } .w56 { width: 56px; } .w70 { width: 70px; } .w89 { width: 90px; }
.w98 { width: 98px; } .w105 { width: 105px; } .w116 { width: 117px; }
.big, .col { flex: none; }
.col { display: flex; flex-direction: column; padding-left: 3px; }
.col button { display: flex; align-items: center; gap: 4px; height: 19px; white-space: nowrap; }
.col svg { width: 12px; height: 12px; }
.col.w116, .col.w105, .col.w89 { padding-left: 1px; }
.nav { width: 87px; flex: none; padding: 0 1px; display: flex; flex-direction: column; justify-content: space-between; }
.nav > div { display: flex; justify-content: space-between; padding: 0 3px; height: 20px; align-items: center; }
.nav button { height: 12px; }
.nav svg { width: 12px; height: 12px; display: block; }
.nav > .pick { padding: 0; height: 17px; background: #cfd0d5; }
.pick select { appearance: none; flex: 1; height: 17px; border: 0; padding: 0 3px; background: #fff; }
.pick i { margin: 0 2px; border-width: 3px 3px 0; }

/* docked panels */
.dock { flex: 1; display: flex; min-height: 0; }
.panel { display: flex; flex-direction: column; flex: none; }
.filter { width: 219px; margin-right: 3px; font-family: "Liberation Sans", Arial, sans-serif; }
.props { width: 215px; margin-right: 3px; border-left: 1px solid #9a9a9e; }
.title { display: flex; align-items: center; height: 16px; background: #cfd0d5; padding-right: 5px; font-family: "Open Sans", sans-serif; }
.title h3 { flex: 1; padding-left: 2px; }
.props .title h3 { padding-left: 5px; }
.title i { border-width: 4px 4px 0; margin-right: 9px; }
.title button { height: 9px; margin-right: 7px; }
.title button:last-child { margin-right: 0; }
.title svg { width: 9px; height: 9px; display: block; }
.title .ic, .ic { width: 12px; height: 12px; }
.props .ic { margin-left: 1px; }
.cutoff { margin-left: -5px; }
.bar { display: flex; align-items: center; gap: 5px; height: 20px; margin-top: 1px; border-top: 1px solid #f6f6f8; background: #cfd0d5; }
.bar svg { width: 12px; height: 12px; display: block; }
.bar .first { margin-left: -2px; }
.bar s { height: 10px; border-left: 1px solid #fff; }
.faded { opacity: .35; }
.bar em { width: 5px; height: 9px; margin: 0 4px 0 7px; background: #8a8a8a; clip-path: polygon(0 0, 100% 0, 100% 55%, 50% 100%, 0 55%); }
.bar hr { width: 10px; height: 1px; border: 0; margin: 5px 0 0; background: #222; }
.combos { display: flex; flex-direction: column; gap: 4px; padding: 2px 3px 1px 0; height: 45px; font-family: "Open Sans", sans-serif; }
.combo { display: flex; align-items: center; height: 19px; position: relative; }
.combo .ic { margin-right: 5px; width: 17px; height: 17px; }
.combo select { appearance: none; flex: 1; height: 19px; border: 1px solid #a8a8a8; border-radius: 0; background: #fff; padding: 0 5px; }
.combo.indent select { padding-left: 17px; }
.combo .drop { position: absolute; right: 1px; top: 1px; width: 14px; height: 17px; padding: 3px; border: 1px solid #a8a8a8; background: #e2e2e2; }
.combo.flat { margin: 2px 0 1px; height: 16px; }
.combo.flat select { height: 16px; background: #e2e2e2; padding: 0 2px; }
.combo.flat .drop { border: 0; height: 14px; }
.sheet { flex: 1; border: 1px solid #808080; background: #f3f2f7; }
.help { height: 65px; margin: 5px 1px -6px 0; border: 1px solid #d3dbe4; border-radius: 3px; }

/* layer tree: rows share the height that is left */
.tree { flex: 1; min-height: 0; display: flex; flex-direction: column; gap: 5px; padding-bottom: 74px; background: #f3f2f7; border-right: 1px solid #fff; line-height: 14px; }
.tree ul { display: flex; flex-direction: column; flex: 1 1 0; min-height: 0; }
.tree .n16 { flex-grow: 16; } .tree .n23 { flex-grow: 23; } .tree .n3 { flex-grow: 3; }
.tree li { flex: 1 1 0; min-height: 0; display: flex; align-items: stretch; }
.tree label { flex: 1; display: flex; align-items: center; background: #cfd0d5; border-bottom: 1px solid #fff; }
.tree label input { margin: 0 8px 0 7px; }
.tree label span { flex: 1; align-self: stretch; border-left: 1px solid #fff; padding-left: 4px; white-space: nowrap; overflow: hidden; }
.sub { margin-left: 27px; border: 1px solid #fff; border-width: 1px 0 0 1px; }
.tree .sub label { background: none; }
.tree .sub label input { margin: 0 12px 0 10px; }
.tree .sel span { background: #0078d7; color: #fff; }
.tog { width: 19px; flex: none; position: relative; }
.tog::before { content: "+"; position: absolute; left: -3px; top: 4px; width: 8px; height: 8px; border: 1px solid #808080; background: #fff; font: 9px/5px "Liberation Sans", sans-serif; text-align: center; }
.tog.open::before { content: "–"; }
input[type=checkbox] { appearance: none; flex: none; width: 9px; height: 9px; border: 1px solid #999; background: #fff; position: relative; }
input[type=checkbox]:checked::before { content: ""; position: absolute; inset: 1px 0; background: #111; clip-path: polygon(0 40%, 18% 30%, 38% 60%, 88% 0, 100% 15%, 40% 100%); }
input[type=checkbox].part { border-color: #666; }
input[type=checkbox].part:checked::before { background: #999; }

.opttabs { display: flex; align-items: stretch; height: 20px; margin-top: 3px; background: #cfd0d5; border-right: 1px solid #fff; font-family: Roboto, sans-serif; }
.opttabs button { padding: 0 5px; white-space: nowrap; border-bottom: 1px solid #a9aab0; }
.opttabs .cur { background: #f3f2f7; border-color: #f3f2f7; padding: 0 6px 2px 1px; }
.opttabs .clip { text-align: left; padding-right: 0; flex: 1; }
.opttabs b { align-self: center; margin: 0 5px 0 3px; border: 3px solid transparent; }
.opttabs .l { border-right: 4px solid #666; border-left: 0; }
.opttabs .r { border-left: 4px solid #111; border-right: 0; margin-right: 4px; }
.opts { height: 134px; padding: 3px 0 0 1px; background: #f3f2f7; border: 1px solid #a9aab0; border-width: 0 1px 1px 0; }
.opts label { display: flex; align-items: center; gap: 3px; height: 18px; }
.opts input[type=checkbox] { width: 10px; height: 10px; border-color: #222; }
.foot { display: flex; height: 17px; margin-top: 2px; background: #cfd0d5; border-top: 1px solid #a9aab0; font-family: "Open Sans", sans-serif; }
.foot button { display: flex; align-items: center; gap: 6px; padding-right: 5px; color: #777; white-space: nowrap; }
.foot .cur { background: #f3f2f7; color: #111; padding: 2px 6px 0 4px; }

/* drawing views */
.view { display: flex; flex-direction: column; min-width: 0; flex: 1824 1 0; border-left: 2px solid #a0a0a4; }
.threeview { flex-grow: 1827; margin-left: 2px; border-left: 1px solid #808080; }
.planview { border-right: 1px solid #808080; }
.tabs { display: flex; height: 18px; padding: 1px 0 0 3px; background: #cfd0d5; color: #707070; }
.tabs div { display: flex; align-items: center; gap: 6px; padding: 0 4px 0 2px; white-space: nowrap; }
.threeview .tabs div { gap: 9px; }
.tabs .cur { background: #f3f2f7; }
.planview .cur { color: #111; }
.tabs button { height: 8px; }
.tabs svg { width: 8px; height: 8px; display: block; }
.stage { flex: 1; min-height: 0; position: relative; background: #fff; }
.draw { display: block; width: 100%; height: 100%; }
.ln { fill: none; stroke: #000; stroke-width: 1; }
.ln path, .ln circle { vector-effect: non-scaling-stroke; }
.ln .bold { stroke-width: 2; }
.grid path { fill: none; stroke: #848484; stroke-width: 1; vector-effect: non-scaling-stroke; stroke-dasharray: 12 3 2 3 2 3; shape-rendering: crispEdges; }
.s4, .s7, .s10, .s13, .s16, .s20, .s22, #toe { vector-effect: non-scaling-stroke; }
.s4 { stroke-width: 3px; } .s7 { stroke-width: 6px; } .s10 { stroke-width: 9px; } .s13 { stroke-width: 12px; }
.s16 { stroke-width: 15px; } .s20 { stroke-width: 18px; } .s22 { stroke-width: 22px; }
.num { font: 14px "Liberation Sans", Arial, sans-serif; fill: #808080; }
.lbl { font: 14px "Liberation Sans", Arial, sans-serif; fill: #111; }
.east { font: 16px "Liberation Sans", Arial, sans-serif; fill: #1414ee; }

.coords { position: absolute; left: 24px; top: 69px; width: 346px; height: 62px; padding: 2px; background: #f0f0f0; border: 1px solid #e0e0e0; border-right: 2px solid #8a8a8a; border-bottom: 2px solid #707070; line-height: 11px; font-family: Roboto, sans-serif; }
.head { display: flex; align-items: center; height: 13px; background: linear-gradient(#c0c0c0, #8a8a8a); padding-right: 4px; }
.head h3 { flex: 1; padding-left: 2px; font-weight: 600; }
.head svg { width: 9px; height: 9px; display: block; }
.head .ic { width: 12px; height: 12px; }
.coords p { padding: 0 1px; white-space: nowrap; }
```
